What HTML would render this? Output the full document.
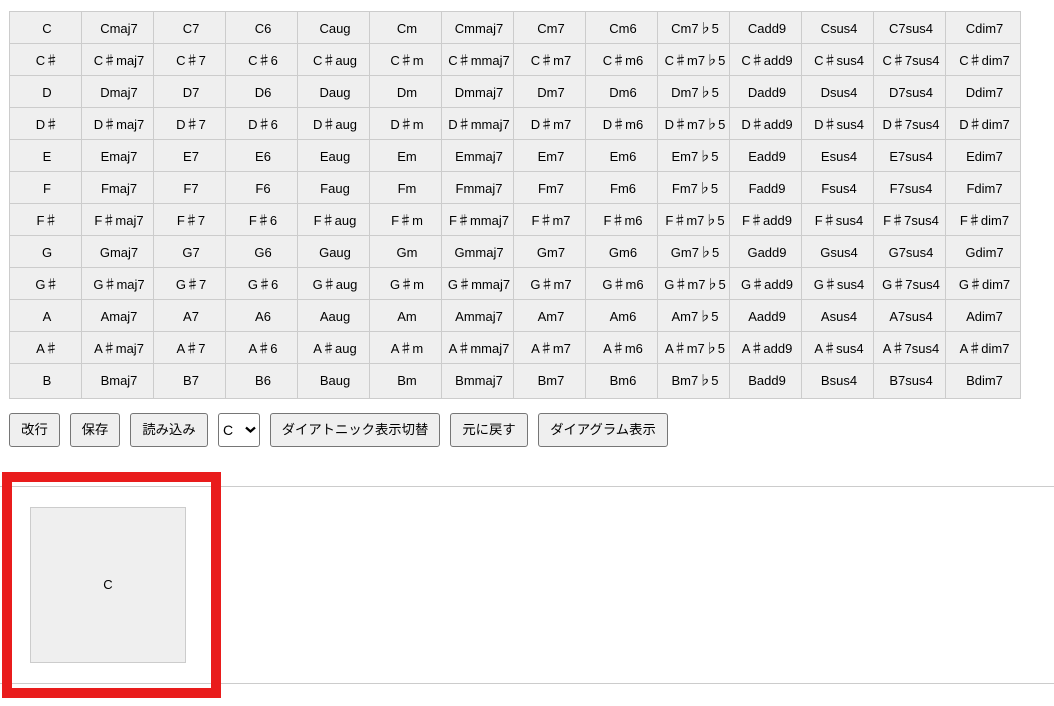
<!DOCTYPE html>
<html lang="ja"><head><meta charset="utf-8"><title>Chords</title>
<style>
html,body{margin:0;padding:0;background:#fff;width:1054px;height:706px;overflow:hidden}
body{position:relative;font-family:"Liberation Sans","Noto Sans CJK JP",sans-serif;font-size:13px;color:#000}
i{font-style:normal;font-family:"Noto Sans CJK JP",sans-serif;line-height:16px}
#g{position:absolute;left:9px;top:11px;display:grid;grid-template-columns:repeat(13,72px) 75px;grid-template-rows:repeat(11,32px) 35px;border-left:1px solid #ccc;border-top:1px solid #ccc}
#g div{box-sizing:border-box;background:#efefef;border-right:1px solid #ccc;border-bottom:1px solid #ccc;line-height:16px;padding:3px 0 0 3px;display:flex;align-items:center;justify-content:center;white-space:nowrap}
#g div:has(i){padding-top:1px}
#g div:nth-last-child(-n+14){padding-top:0;padding-bottom:1px}
#g div span{display:block;line-height:16px;height:16px}
.b{position:absolute;top:413px;height:34px;box-sizing:border-box;background:#efefef;border:1px solid #767676;border-radius:3px;display:flex;align-items:center;justify-content:center;white-space:nowrap;font-size:13.33px;padding-bottom:1px;line-height:16px}
.h{position:absolute;left:0;width:1054px;height:1px;background:#ccc}
#r{position:absolute;left:2px;top:472px;width:219px;height:226px;box-sizing:border-box;border:10px solid #e91c1c}
#c{position:absolute;left:30px;top:507px;width:156px;height:156px;box-sizing:border-box;background:#efefef;border:1px solid #ccc;display:flex;align-items:center;justify-content:center;padding-bottom:2px}
</style></head><body>
<div id="g">
<div>C</div><div>Cmaj7</div><div>C7</div><div>C6</div><div>Caug</div><div>Cm</div><div>Cmmaj7</div><div>Cm7</div><div>Cm6</div><div><span>Cm7♭5</span></div><div>Cadd9</div><div>Csus4</div><div>C7sus4</div><div>Cdim7</div>
<div><span>C<i>♯</i></span></div><div><span>C<i>♯</i>maj7</span></div><div><span>C<i>♯</i>7</span></div><div><span>C<i>♯</i>6</span></div><div><span>C<i>♯</i>aug</span></div><div><span>C<i>♯</i>m</span></div><div><span>C<i>♯</i>mmaj7</span></div><div><span>C<i>♯</i>m7</span></div><div><span>C<i>♯</i>m6</span></div><div><span>C<i>♯</i>m7♭5</span></div><div><span>C<i>♯</i>add9</span></div><div><span>C<i>♯</i>sus4</span></div><div><span>C<i>♯</i>7sus4</span></div><div><span>C<i>♯</i>dim7</span></div>
<div>D</div><div>Dmaj7</div><div>D7</div><div>D6</div><div>Daug</div><div>Dm</div><div>Dmmaj7</div><div>Dm7</div><div>Dm6</div><div><span>Dm7♭5</span></div><div>Dadd9</div><div>Dsus4</div><div>D7sus4</div><div>Ddim7</div>
<div><span>D<i>♯</i></span></div><div><span>D<i>♯</i>maj7</span></div><div><span>D<i>♯</i>7</span></div><div><span>D<i>♯</i>6</span></div><div><span>D<i>♯</i>aug</span></div><div><span>D<i>♯</i>m</span></div><div><span>D<i>♯</i>mmaj7</span></div><div><span>D<i>♯</i>m7</span></div><div><span>D<i>♯</i>m6</span></div><div><span>D<i>♯</i>m7♭5</span></div><div><span>D<i>♯</i>add9</span></div><div><span>D<i>♯</i>sus4</span></div><div><span>D<i>♯</i>7sus4</span></div><div><span>D<i>♯</i>dim7</span></div>
<div>E</div><div>Emaj7</div><div>E7</div><div>E6</div><div>Eaug</div><div>Em</div><div>Emmaj7</div><div>Em7</div><div>Em6</div><div><span>Em7♭5</span></div><div>Eadd9</div><div>Esus4</div><div>E7sus4</div><div>Edim7</div>
<div>F</div><div>Fmaj7</div><div>F7</div><div>F6</div><div>Faug</div><div>Fm</div><div>Fmmaj7</div><div>Fm7</div><div>Fm6</div><div><span>Fm7♭5</span></div><div>Fadd9</div><div>Fsus4</div><div>F7sus4</div><div>Fdim7</div>
<div><span>F<i>♯</i></span></div><div><span>F<i>♯</i>maj7</span></div><div><span>F<i>♯</i>7</span></div><div><span>F<i>♯</i>6</span></div><div><span>F<i>♯</i>aug</span></div><div><span>F<i>♯</i>m</span></div><div><span>F<i>♯</i>mmaj7</span></div><div><span>F<i>♯</i>m7</span></div><div><span>F<i>♯</i>m6</span></div><div><span>F<i>♯</i>m7♭5</span></div><div><span>F<i>♯</i>add9</span></div><div><span>F<i>♯</i>sus4</span></div><div><span>F<i>♯</i>7sus4</span></div><div><span>F<i>♯</i>dim7</span></div>
<div>G</div><div>Gmaj7</div><div>G7</div><div>G6</div><div>Gaug</div><div>Gm</div><div>Gmmaj7</div><div>Gm7</div><div>Gm6</div><div><span>Gm7♭5</span></div><div>Gadd9</div><div>Gsus4</div><div>G7sus4</div><div>Gdim7</div>
<div><span>G<i>♯</i></span></div><div><span>G<i>♯</i>maj7</span></div><div><span>G<i>♯</i>7</span></div><div><span>G<i>♯</i>6</span></div><div><span>G<i>♯</i>aug</span></div><div><span>G<i>♯</i>m</span></div><div><span>G<i>♯</i>mmaj7</span></div><div><span>G<i>♯</i>m7</span></div><div><span>G<i>♯</i>m6</span></div><div><span>G<i>♯</i>m7♭5</span></div><div><span>G<i>♯</i>add9</span></div><div><span>G<i>♯</i>sus4</span></div><div><span>G<i>♯</i>7sus4</span></div><div><span>G<i>♯</i>dim7</span></div>
<div>A</div><div>Amaj7</div><div>A7</div><div>A6</div><div>Aaug</div><div>Am</div><div>Ammaj7</div><div>Am7</div><div>Am6</div><div><span>Am7♭5</span></div><div>Aadd9</div><div>Asus4</div><div>A7sus4</div><div>Adim7</div>
<div><span>A<i>♯</i></span></div><div><span>A<i>♯</i>maj7</span></div><div><span>A<i>♯</i>7</span></div><div><span>A<i>♯</i>6</span></div><div><span>A<i>♯</i>aug</span></div><div><span>A<i>♯</i>m</span></div><div><span>A<i>♯</i>mmaj7</span></div><div><span>A<i>♯</i>m7</span></div><div><span>A<i>♯</i>m6</span></div><div><span>A<i>♯</i>m7♭5</span></div><div><span>A<i>♯</i>add9</span></div><div><span>A<i>♯</i>sus4</span></div><div><span>A<i>♯</i>7sus4</span></div><div><span>A<i>♯</i>dim7</span></div>
<div>B</div><div>Bmaj7</div><div>B7</div><div>B6</div><div>Baug</div><div>Bm</div><div>Bmmaj7</div><div>Bm7</div><div>Bm6</div><div><span>Bm7♭5</span></div><div>Badd9</div><div>Bsus4</div><div>B7sus4</div><div>Bdim7</div>
</div>
<div class="b" style="left:9px;width:51px">改行</div>
<div class="b" style="left:70px;width:50px">保存</div>
<div class="b" style="left:130px;width:78px">読み込み</div>
<div class="b" style="left:218px;width:42px;background:#fff;justify-content:flex-start;padding:0 0 0 4px;font-size:14px">C
<svg style="position:absolute;left:26px;top:12px" width="11" height="8" viewBox="0 0 11 8"><path d="M1 1.5L5.5 5.5L10 1.5" fill="none" stroke="#000" stroke-width="2.3"/></svg></div>
<div class="b" style="left:270px;width:170px">ダイアトニック表示切替</div>
<div class="b" style="left:450px;width:78px">元に戻す</div>
<div class="b" style="left:538px;width:130px">ダイアグラム表示</div>
<div class="h" style="top:486px"></div>
<div class="h" style="top:683px"></div>
<div id="r"></div>
<div id="c">C</div>
</body></html>
